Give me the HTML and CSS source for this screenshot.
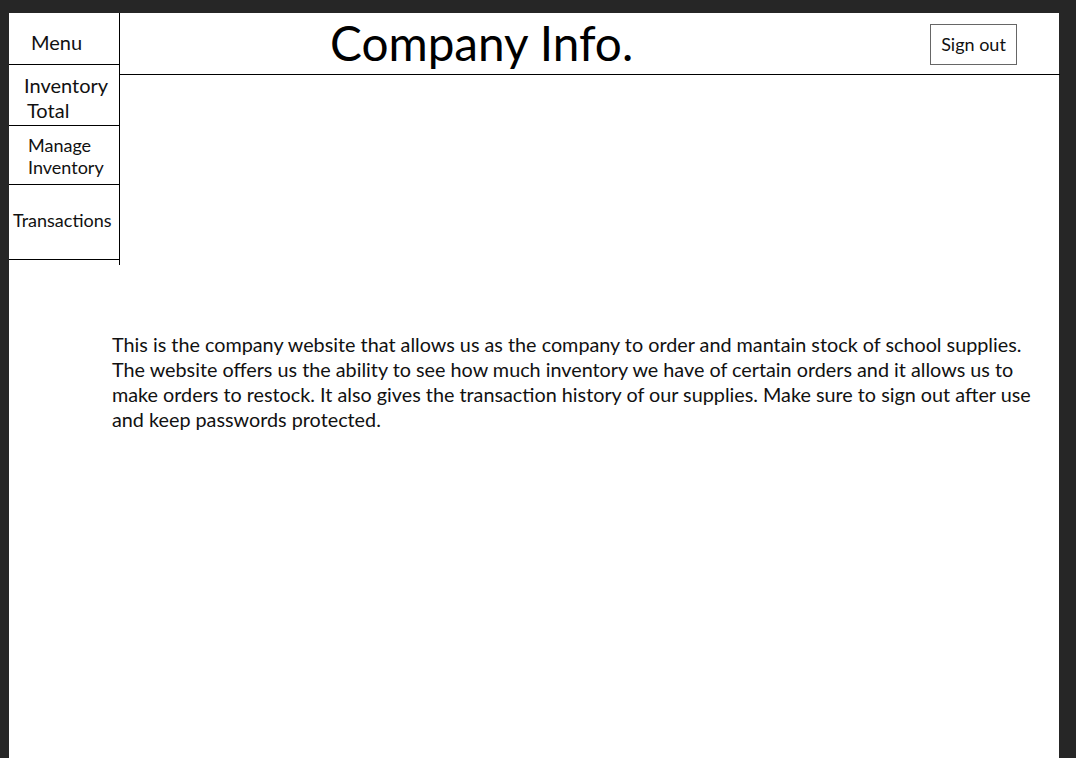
FILE: index.html
```html
<!DOCTYPE html>
<html>
<head>
<meta charset="utf-8">
<link rel="stylesheet" href="styles.css">
</head>
<body>
<div class="page">
  <div class="top">
    <nav class="sidebar">
      <div class="item menu">Menu</div>
      <div class="item inv">Inventory<br><span class="total">Total</span></div>
      <div class="item manage">Manage<br>Inventory</div>
      <div class="item trans">Transactions</div>
    </nav>
    <div class="main">
      <header class="header">
        <h1 class="title">Company Info.</h1>
        <button class="signout">Sign out</button>
      </header>
    </div>
  </div>
  <p class="about">This is the company website that allows us as the company to order and mantain stock of school supplies. The website offers us the ability to see how much inventory we have of certain orders and it allows us to make orders to restock. It also gives the transaction history of our supplies. Make sure to sign out after use and keep passwords protected.</p>
</div>
</body>
</html>
```
FILE: styles.css
```css
html, body {
  margin: 0;
  padding: 0;
  background: #262626;
  height: 100%;
  overflow: hidden;
}
body {
  font-family: Lato, "Open Sans", sans-serif;
  color: #111;
}
.page {
  margin: 13px 0 0 9px;
  width: 1050px;
  height: 745px;
  background: #fff;
}
.top {
  display: flex;
  align-items: flex-start;
}
.sidebar {
  width: 110px;
  height: 252px;
  border-right: 1px solid #000;
  flex: none;
}
.item {
  border-bottom: 1px solid #000;
  margin-right: -1px;
  box-sizing: border-box;
}
.menu {
  height: 52px;
  font-size: 20px;
  padding: 17px 0 0 22px;
}
.inv {
  height: 61px;
  font-size: 20px;
  line-height: 25px;
  padding: 8px 0 0 15px;
}
.inv .total {
  padding-left: 3px;
}
.manage {
  height: 59px;
  font-size: 18px;
  line-height: 22px;
  padding: 8px 0 0 19px;
}
.trans {
  height: 75px;
  font-size: 18px;
  padding: 24px 0 0 4px;
}
.main {
  flex: 1;
}
.header {
  height: 61px;
  border-bottom: 1px solid #000;
  margin-right: -1px;
  display: flex;
  align-items: center;
  justify-content: space-between;
  padding: 0 43px 0 210px;
}
.title {
  margin: 0 0 2px;
  font-weight: 400;
  font-size: 47.7px;
  line-height: 1;
  color: #000;
}
.signout {
  width: 87px;
  height: 41px;
  border: 1px solid #666;
  background: #fff;
  font-family: inherit;
  font-size: 18px;
  color: #111;
  padding: 0;
  margin-top: 1px;
}
.about {
  margin: 67px 0 0 103px;
  width: 930px;
  font-size: 19.8px;
  line-height: 25px;
}
```
